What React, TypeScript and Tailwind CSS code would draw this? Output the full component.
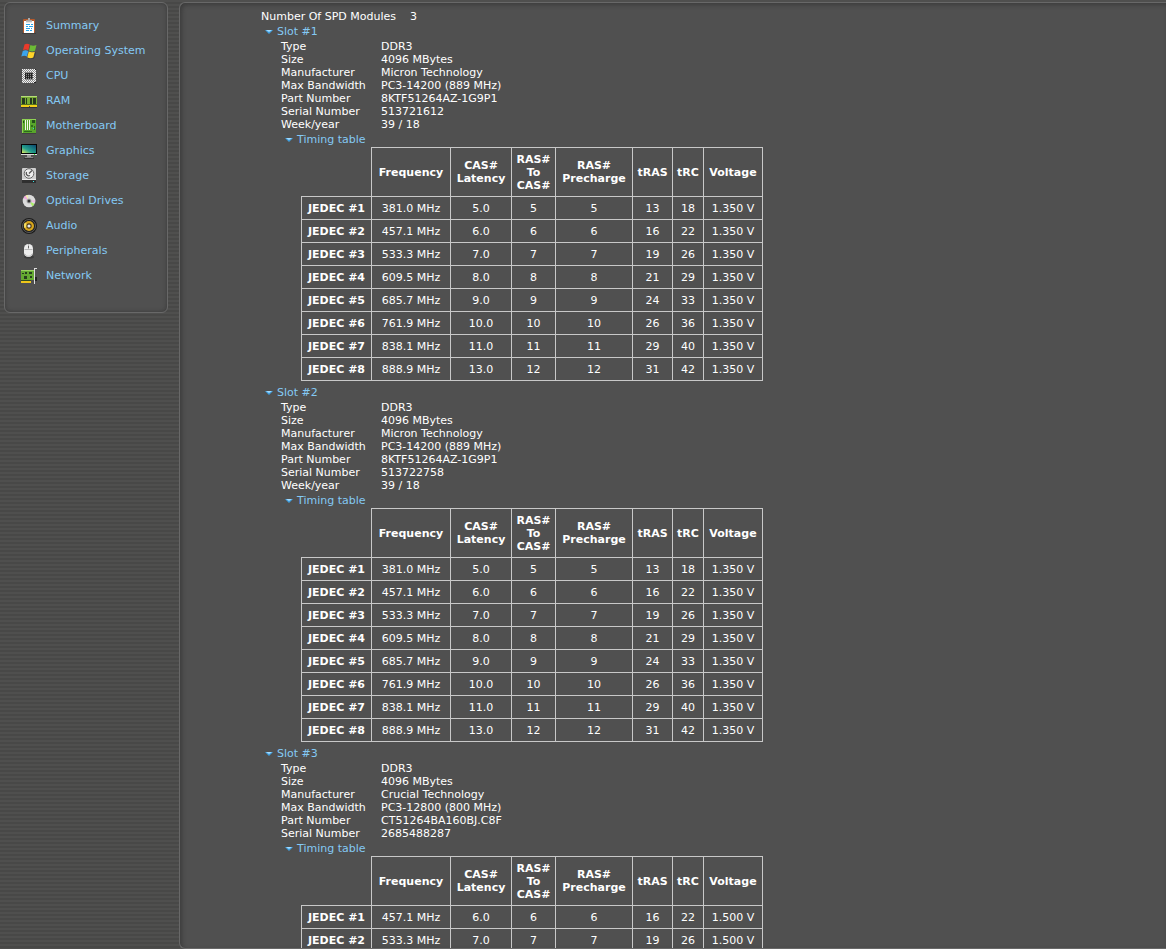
import React, { useState } from "react";

type Row = string[];

type Slot = {
  name: string;
  info: [string, string][];
  timings: Row[];
};

const micronTimings: Row[] = [
  ["JEDEC #1", "381.0 MHz", "5.0", "5", "5", "13", "18", "1.350 V"],
  ["JEDEC #2", "457.1 MHz", "6.0", "6", "6", "16", "22", "1.350 V"],
  ["JEDEC #3", "533.3 MHz", "7.0", "7", "7", "19", "26", "1.350 V"],
  ["JEDEC #4", "609.5 MHz", "8.0", "8", "8", "21", "29", "1.350 V"],
  ["JEDEC #5", "685.7 MHz", "9.0", "9", "9", "24", "33", "1.350 V"],
  ["JEDEC #6", "761.9 MHz", "10.0", "10", "10", "26", "36", "1.350 V"],
  ["JEDEC #7", "838.1 MHz", "11.0", "11", "11", "29", "40", "1.350 V"],
  ["JEDEC #8", "888.9 MHz", "13.0", "12", "12", "31", "42", "1.350 V"],
];

const slots: Slot[] = [
  {
    name: "Slot #1",
    info: [
      ["Type", "DDR3"],
      ["Size", "4096 MBytes"],
      ["Manufacturer", "Micron Technology"],
      ["Max Bandwidth", "PC3-14200 (889 MHz)"],
      ["Part Number", "8KTF51264AZ-1G9P1"],
      ["Serial Number", "513721612"],
      ["Week/year", "39 / 18"],
    ],
    timings: micronTimings,
  },
  {
    name: "Slot #2",
    info: [
      ["Type", "DDR3"],
      ["Size", "4096 MBytes"],
      ["Manufacturer", "Micron Technology"],
      ["Max Bandwidth", "PC3-14200 (889 MHz)"],
      ["Part Number", "8KTF51264AZ-1G9P1"],
      ["Serial Number", "513722758"],
      ["Week/year", "39 / 18"],
    ],
    timings: micronTimings,
  },
  {
    name: "Slot #3",
    info: [
      ["Type", "DDR3"],
      ["Size", "4096 MBytes"],
      ["Manufacturer", "Crucial Technology"],
      ["Max Bandwidth", "PC3-12800 (800 MHz)"],
      ["Part Number", "CT51264BA160BJ.C8F"],
      ["Serial Number", "2685488287"],
    ],
    timings: [
      ["JEDEC #1", "457.1 MHz", "6.0", "6", "6", "16", "22", "1.500 V"],
      ["JEDEC #2", "533.3 MHz", "7.0", "7", "7", "19", "26", "1.500 V"],
    ],
  },
];

const icons: Record<string, React.ReactNode> = {
  Summary: (
    <>
      <path d="M1 15.5h14" stroke="#333" opacity=".6" />
      <rect x="2" y="1" width="12" height="14" rx="1" fill="#b5592b" />
      <rect x="3" y="3" width="10" height="12" fill="#fff" />
      <path d="M5 4V2h2V0h2v2h2v2z" fill="#a9a9a9" />
      <path d="M5 4h6" stroke="#ccc" />
      <path d="M5 6.5h4m1 0h2M5 8.5h2m1 0h4M5 10.5h4m1 0h1M5 12.5h3m1 0h2" stroke="#2aa5ea" />
    </>
  ),
  "Operating System": (
    <>
      <path d="M3.500 1.500c2-1 3.500-.8 5.200 0L7.400 7.300c-1.600-.9-3.200-1-5.400-.2z" fill="#ea3a2a" />
      <path d="M9.400 2c1.900 1 3.600 1 6.100 0L14 7.800c-2 1-4 .9-6 0z" fill="#6dbb35" />
      <path d="M1.800 7.900c2-.9 3.900-.8 5.500.2L5.900 13.500c-1.700-1-3.300-1-5.600-.1z" fill="#3ba4ec" />
      <path d="M7.800 8.600c1.900.9 3.700.9 6 .1L12.300 14.500c-2 1-4.100 1-6 -.2z" fill="#ffd429" />
      <path d="M7 15.300c2 1 4 .8 6-.2l1.700-6" fill="none" stroke="#333" opacity=".6" />
    </>
  ),
  CPU: (
    <>
      <defs>
        <pattern id="pins" width="2" height="2" patternUnits="userSpaceOnUse">
          <path d="M0 0h1v1H0zM1 1h1v1H1z" fill="#f2f2f2" />
        </pattern>
      </defs>
      <rect x="1" y="1" width="14" height="14" fill="#8a8a8a" />
      <rect x="1" y="1" width="14" height="14" fill="url(#pins)" />
      <rect x="4" y="4" width="8" height="8" fill="#8c8c8c" />
      <path d="M4 5.500h8M4 7.500h8M4 9.500h8" stroke="#3a3a3a" />
      <path d="M4.500 5v6M6.500 5v6M8.500 5v6M10.500 5v6" stroke="#222" />
      <path d="M14 1h1v1h-1zM13 14h2v1h-2z" fill="#222" />
    </>
  ),
  RAM: (
    <>
      <rect y="3" width="16" height="10" fill="#79ad35" />
      <path d="M0 3.500h16" stroke="#b7dc7b" />
      <path d="M1 5h3v6H1zM5 5h1v6H5zM9 5h2v6H9zM12 5h3v6h-3z" fill="#273820" />
      <path d="M0 11h16v1H0z" fill="#54751f" />
      <path d="M0 12h16v2H9v-1H8v1H0z" fill="#f2d018" />
      <path d="M0 14.500h16" stroke="#222" opacity=".6" />
    </>
  ),
  Motherboard: (
    <>
      <rect x="1" y="1" width="14" height="14" fill="#58a52b" />
      <path d="M1 1h14v1H2v13H1z" fill="#8fd253" />
      <path d="M4.500 2v10M6.500 2v10M8.500 2v10" stroke="#f2fbe8" />
      <path d="M11 2h3v3h-3zM2 3h1v2H2z" fill="#24501a" />
      <path d="M10 7h2v2h-2zM3 13h8v1H3zM13 8h1v4h-1z" fill="#2d6a1f" />
      <path d="M12 10h1v1h-1z" fill="#34d4ca" />
      <path d="M1 15.500h14" stroke="#333" opacity=".5" />
    </>
  ),
  Graphics: (
    <>
      <defs>
        <linearGradient id="screen" x1="0" y1="1" x2="1" y2="0">
          <stop offset="0" stopColor="#e2ec62" />
          <stop offset=".4" stopColor="#25a18d" />
          <stop offset="1" stopColor="#0b4770" />
        </linearGradient>
      </defs>
      <rect y="1" width="16" height="11" fill="#050505" />
      <rect x="1" y="2" width="14" height="8" fill="url(#screen)" />
      <path d="M0 11.500h16" stroke="#ddd" />
      <path d="M13 11h1v1h-1z" fill="#2ff52f" />
      <path d="M6 12h4v2H6z" fill="#999" />
      <path d="M4 14.500h8" stroke="#888" />
      <path d="M3 15.500h10" stroke="#333" />
    </>
  ),
  Storage: (
    <>
      <rect x="1" width="14" height="13" rx="1" fill="#cfcfcf" />
      <rect x="1" y="12" width="14" height="3" fill="#2f2f2f" />
      <path d="M1 11.500h14" stroke="#eee" />
      <circle cx="8" cy="5.500" r="4.800" fill="#eee" stroke="#666" />
      <path d="M5.500 4C4.500 6.500 6.500 8.500 9 7.500M8 5.500l3-3" fill="none" stroke="#555" strokeWidth="1.300" />
      <path d="M12 13h1v1h-1z" fill="#32e7e7" />
    </>
  ),
  "Optical Drives": (
    <>
      <circle cx="8" cy="8" r="6.300" fill="#dcdcdc" />
      <path d="M8 8L2.500 5A6.300 6.300 0 0 1 5 2.500z" fill="#efa8df" />
      <path d="M8 8L4.500 2.800 6.500 1.800z" fill="#f1ecaa" />
      <path d="M8 8l5.500 3-2 2.500z" fill="#aaec68" />
      <path d="M8 8l6.200-1v2.500z" fill="#eab9de" />
      <circle cx="8" cy="8" r="2.500" fill="#aaa" />
      <circle cx="8" cy="8" r="1.500" fill="#333" />
    </>
  ),
  Audio: (
    <>
      <circle cx="8" cy="8" r="8" fill="#1b1b1b" />
      <circle cx="8" cy="8" r="6.500" fill="none" stroke="#777" strokeWidth=".7" />
      <circle cx="8" cy="8" r="5" fill="#d6a51e" />
      <path d="M8 8L4 4.500A5 5 0 0 0 3.500 10z" fill="#f6dd61" />
      <circle cx="8" cy="8" r="2.700" fill="#4b3b19" />
      <circle cx="8" cy="8" r="1.600" fill="#e8e8e8" />
    </>
  ),
  Peripherals: (
    <>
      <ellipse cx="8" cy="14" rx="5" ry="1.500" fill="#333" opacity=".7" />
      <rect x="3" y="1" width="9" height="13" rx="4.500" fill="#ededed" />
      <path d="M3.500 6.500h8M7.500 1v5" stroke="#b5b5b5" fill="none" />
      <path d="M7 3h1v2H7z" fill="#666" />
      <path d="M4 11c1 3 6 3 7 0" fill="none" stroke="#bbb" />
    </>
  ),
  Network: (
    <>
      <rect y="2" width="13" height="10" fill="#64aa31" />
      <path d="M0 2.500h13" stroke="#9cd265" />
      <path d="M1 5h2v1H1zM4 4h2v2H4zM8 4h3v2H8zM3 8h3v3H3zM9 8h2v2H9z" fill="#263f1e" />
      <path d="M0 12h10v1H0z" fill="#304c20" />
      <path d="M0 13h10v2H0z" fill="#efc61a" />
      <path d="M13 .5h3M13.500 0v16" stroke="#ddd" fill="none" />
      <path d="M14 9h2v4h-2z" fill="#222" />
    </>
  ),
};

const columns = ["Frequency", "CAS# Latency", "RAS# To CAS#", "RAS# Precharge", "tRAS", "tRC", "Voltage"];

function Sidebar() {
  return (
    <nav className="h-[311px] w-[164px] shrink-0 rounded-md border border-[#686868] bg-[#505050] pt-[10px] pl-4 shadow-[inset_0_0_4px_#383838]">
      <ul>
        {Object.keys(icons).map((name) => (
          <li key={name}>
            <a href="#" className="flex h-[25px] items-start gap-[9px] leading-[25px] text-[#84c9f4]">
              <svg className="mt-[5px] size-4" viewBox="0 0 16 16" aria-hidden="true">
                {icons[name]}
              </svg>
              {name}
            </a>
          </li>
        ))}
      </ul>
    </nav>
  );
}

type ToggleProps = { label: string; open: boolean; onClick: () => void };

function Toggle({ label, open, onClick }: ToggleProps) {
  return (
    <button
      type="button"
      aria-expanded={open}
      onClick={onClick}
      className="ml-1 flex h-4 items-center gap-1 text-[#84c9f4]"
    >
      <svg className="mt-[2px] h-1 w-2" viewBox="0 0 8 4" aria-hidden="true">
        <path d="M0 0h8L4 4z" fill="#3f9fe0" />
        <path d="M1 0h6L4 2z" fill="#a5dcff" />
      </svg>
      {label}
    </button>
  );
}

function TimingTable({ rows }: { rows: Row[] }) {
  return (
    <table className="ml-5 w-[462px] table-fixed border-collapse text-center">
      <colgroup>
        <col className="w-[70px]" />
        <col className="w-[79px]" />
        <col className="w-[61px]" />
        <col className="w-[44px]" />
        <col className="w-[77px]" />
        <col className="w-[40px]" />
        <col className="w-[31px]" />
        <col className="w-[59px]" />
      </colgroup>
      <thead>
        <tr className="h-[49px]">
          <td></td>
          {columns.map((column) => (
            <th key={column} scope="col" className="border border-[#c8c8c8]">
              {column}
            </th>
          ))}
        </tr>
      </thead>
      <tbody>
        {rows.map(([name, ...values]) => (
          <tr key={name} className="h-[23px]">
            <th scope="row" className="border border-[#c8c8c8] whitespace-nowrap">
              {name}
            </th>
            {values.map((value, i) => (
              <td key={i} className="border border-[#c8c8c8] whitespace-nowrap">
                {value}
              </td>
            ))}
          </tr>
        ))}
      </tbody>
    </table>
  );
}

function SlotSection({ slot }: { slot: Slot }) {
  const [open, setOpen] = useState(true);
  const [tableOpen, setTableOpen] = useState(true);

  return (
    <section className="mb-[3px]">
      <Toggle label={slot.name} open={open} onClick={() => setOpen(!open)} />
      {open && (
        <div className="pt-px pl-5">
          <dl className="grid grid-cols-[100px_1fr]">
            {slot.info.map(([label, value]) => (
              <React.Fragment key={label}>
                <dt>{label}</dt>
                <dd>{value}</dd>
              </React.Fragment>
            ))}
          </dl>
          <Toggle label="Timing table" open={tableOpen} onClick={() => setTableOpen(!tableOpen)} />
          {tableOpen && <TimingTable rows={slot.timings} />}
        </div>
      )}
    </section>
  );
}

function App() {
  return (
    <div className="flex h-screen items-start gap-[11px] overflow-hidden bg-[#4b4b4a] bg-[repeating-linear-gradient(#4f4f4e_0_2px,#484847_2px_4px)] pt-[2px] pl-1 font-['DejaVu_Sans',sans-serif] text-[11px] leading-[13px] text-white">
      <Sidebar />
      <main className="h-full min-w-0 flex-1 overflow-hidden rounded-l-md border border-r-0 border-[#686868] bg-[#505050] shadow-[inset_2px_2px_4px_#3c3c3c]">
        <div className="h-full overflow-auto pt-[7px] pl-[81px] [scrollbar-width:none]">
          <p className="flex gap-[14px]">
            <span>Number Of SPD Modules</span>
            <span>3</span>
          </p>
          {slots.map((slot) => (
            <SlotSection key={slot.name} slot={slot} />
          ))}
        </div>
      </main>
    </div>
  );
}

export default App;
